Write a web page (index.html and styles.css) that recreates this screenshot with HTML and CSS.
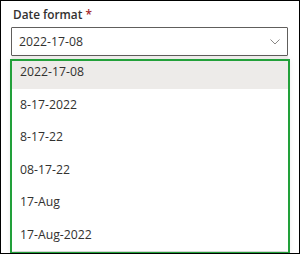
FILE: index.html
```html
<!DOCTYPE html>
<html>
<head>
<meta charset="utf-8">
<link rel="stylesheet" href="styles.css">
</head>
<body>
<div class="frame">
  <div class="field">
    <label class="label">Date format <span class="req">*</span></label>
    <div class="select">
      <span class="value">2022-17-08</span>
      <svg class="chev" width="10" height="6" viewBox="0 0 10 6"><path d="M0.5 0.5 L5 5 L9.5 0.5" fill="none" stroke="#8a8886" stroke-width="1"/></svg>
    </div>
  </div>
  <div class="below">2022-17-08 12:00</div>
  <ul class="menu">
    <li class="item selected">2022-17-08</li>
    <li class="item">8-17-2022</li>
    <li class="item">8-17-22</li>
    <li class="item">08-17-22</li>
    <li class="item">17-Aug</li>
    <li class="item">17-Aug-2022</li>
  </ul>
  <div class="highlight"></div>
</div>
</body>
</html>
```

FILE: styles.css
```css
html, body {
  margin: 0;
  padding: 0;
  background: #fff;
}
.frame {
  position: relative;
  width: 300px;
  height: 254px;
  box-sizing: border-box;
  border: 1px solid #000;
  overflow: hidden;
  font-family: "Open Sans", "Noto Sans", sans-serif;
  font-size: 12.25px;
  color: #323130;
}
.field {
  display: flex;
  flex-direction: column;
  padding: 4px 0 0 10px;
}
.label {
  font-weight: 600;
  font-size: 11.8px;
  line-height: 18px;
  padding: 0 0 4px 2px;
  color: #323130;
}
.req {
  color: #a4262c;
}
.select {
  width: 277px;
  height: 29px;
  box-sizing: border-box;
  border: 1px solid #605e5c;
  border-radius: 1px;
  display: flex;
  align-items: center;
  justify-content: space-between;
  padding: 0 7px 0 7px;
}
.value {
  line-height: 20px;
}
.chev {
  display: block;
}
.below {
  padding: 192px 0 0 20px;
  line-height: 18px;
  font-size: 11px;
  color: #605e5c;
}
.menu {
  position: absolute;
  left: 11px;
  top: 55px;
  width: 276px;
  margin: 0;
  padding: 0;
  list-style: none;
  background: #fff;
  box-shadow: 0 3px 7px rgba(0,0,0,0.13), 0 1px 2px rgba(0,0,0,0.11);
}
.item {
  height: 32.5px;
  line-height: 32.5px;
  padding: 0 8px;
}
.item.selected {
  background: #edebe9;
}
.highlight {
  position: absolute;
  left: 9px;
  top: 58px;
  width: 280px;
  height: 195px;
  box-sizing: border-box;
  border: 2px solid #22a03a;
}
```
